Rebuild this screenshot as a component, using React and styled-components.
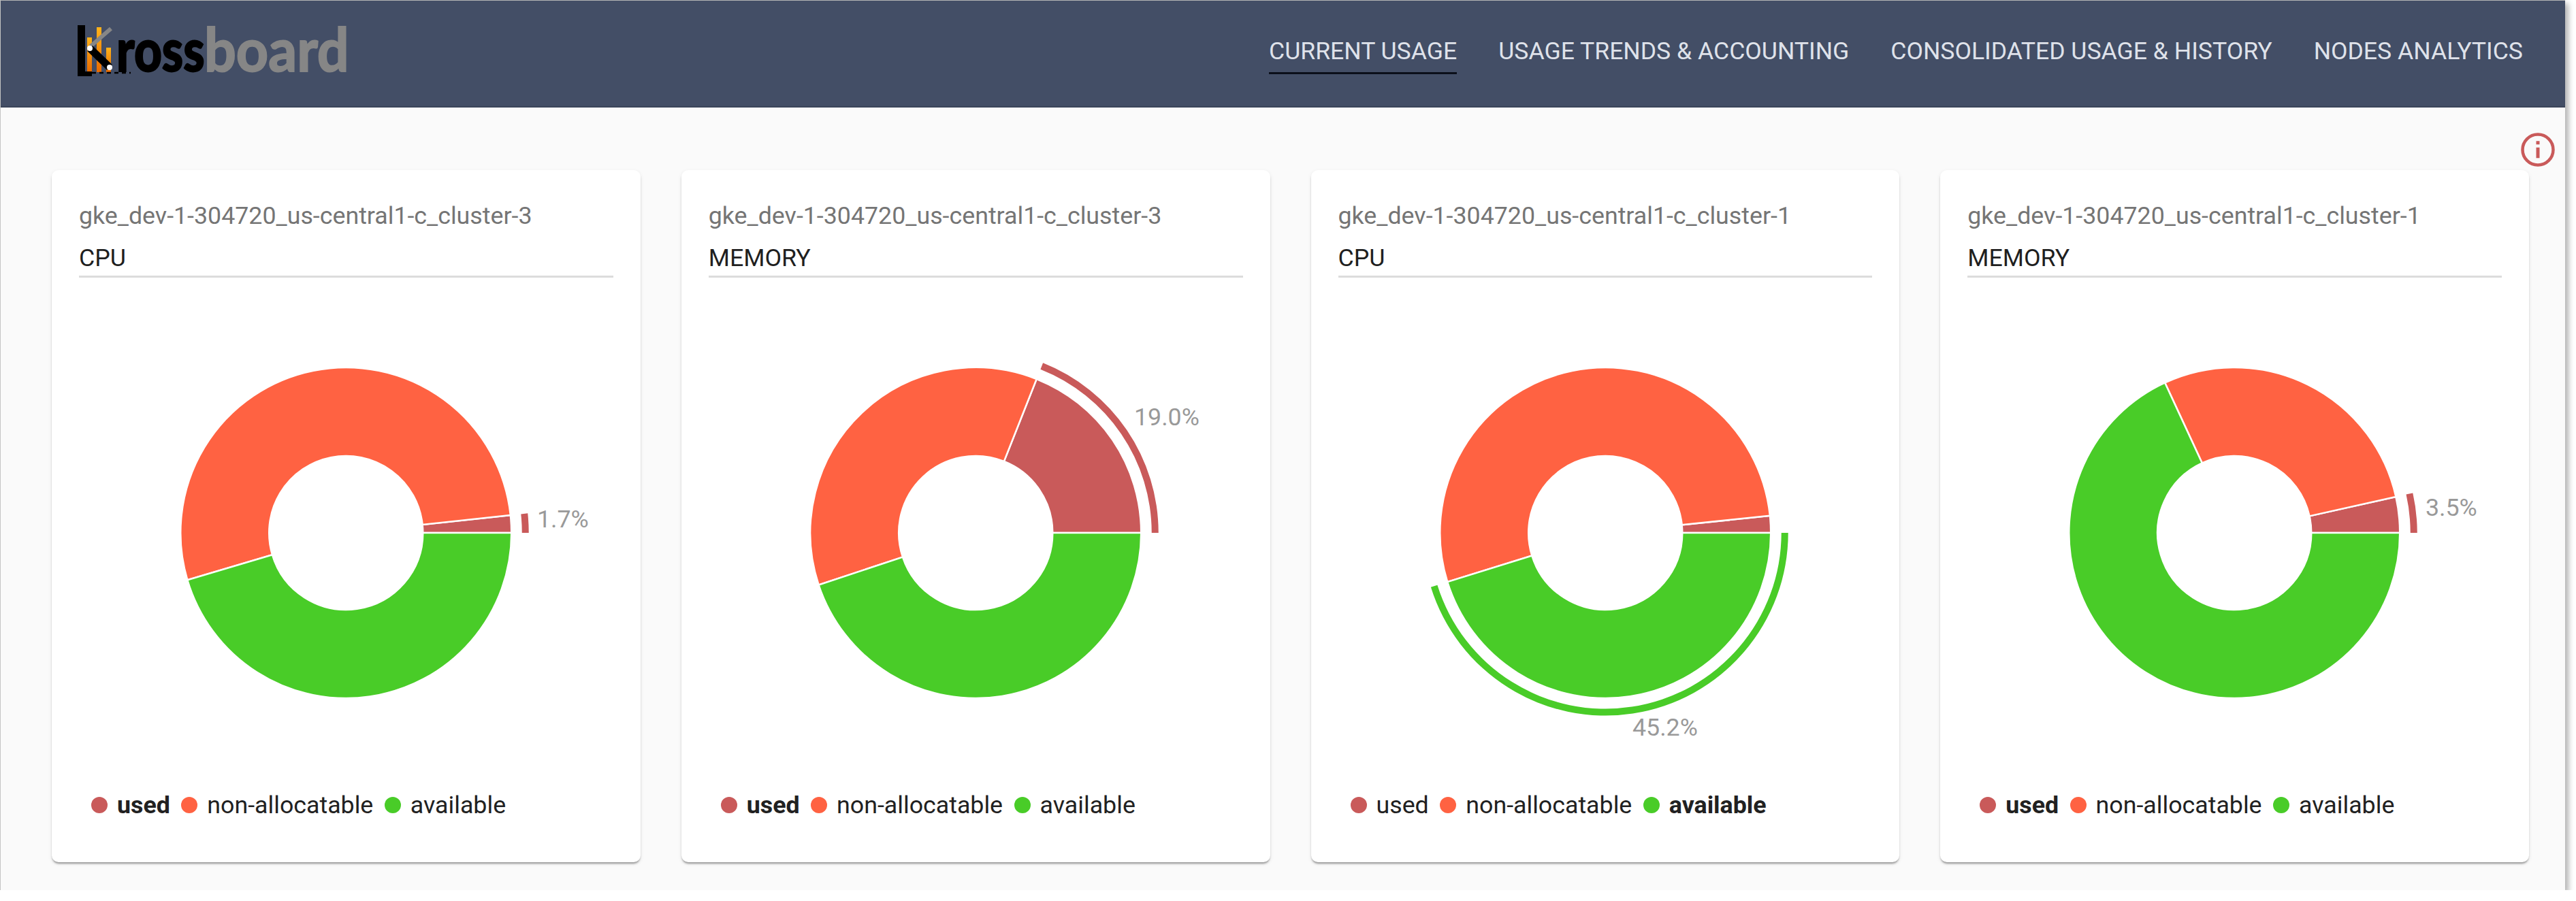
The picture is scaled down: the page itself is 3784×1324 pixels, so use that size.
import React from 'react';
import styled, { createGlobalStyle } from 'styled-components';

const Global = createGlobalStyle`
  html, body { margin: 0; padding: 0; background: #fff; }
  body { font-family: Roboto, "Liberation Sans", sans-serif; }
`;

const COLORS = { used: '#c95a5a', non: '#ff6242', avail: '#49cc28' };
const CX = 432.25, CY = 375, R = 243, r = 113, ER1 = 258.5, ER2 = 268.5;

const Frame = styled.div`
  width: 3767px;
  height: 1307px;
  border-top: 1px solid #b5b5b5;
  border-left: 1px solid #c4c4c4;
  background: #fafafa;
  box-shadow: 5px 5px 8px rgba(0, 0, 0, 0.3);
  display: flex;
  flex-direction: column;
`;
const Header = styled.header`
  height: 157px;
  flex: none;
  background: #434e66;
  box-shadow: inset 0 -2px 1px rgba(0, 0, 0, 0.12);
  display: flex;
  align-items: flex-start;
  justify-content: space-between;
  padding: 0 62px 0 112px;
`;
const LogoWrap = styled.div`
  margin-top: 5px;
  line-height: 0;
`;
const Nav = styled.nav`
  display: flex;
  gap: 61px;
`;
const NavItem = styled.a`
  margin-top: 53px;
  height: 52px;
  font-size: 35.6px;
  line-height: 42px;
  font-weight: 400;
  color: #dfe2ea;
  white-space: nowrap;
  border-bottom: ${(p) => (p.$active ? '3px solid #0b0f1a' : '3px solid transparent')};
`;
const Main = styled.main`
  position: relative;
  flex: 1;
  padding: 92px 53px 41px 75px;
  display: grid;
  grid-template-columns: repeat(4, 1fr);
  gap: 60px;
`;
const InfoButton = styled.span`
  position: absolute;
  top: 37px;
  right: 15px;
  width: 50px;
  height: 50px;
  line-height: 0;
`;
const Card = styled.section`
  background: #fff;
  border-radius: 10px;
  box-shadow: 0 3px 3px -1px rgba(0, 0, 0, 0.38), 0 2px 6px rgba(0, 0, 0, 0.08);
  padding: 47px 40px 0;
  display: flex;
  flex-direction: column;
  min-width: 0;
`;
const Cluster = styled.div`
  font-size: 35.75px;
  line-height: 40px;
  color: #757575;
  white-space: nowrap;
`;
const Resource = styled.div`
  font-size: 35.75px;
  line-height: 40px;
  margin-top: 22px;
  color: #1f1f1f;
  border-bottom: 3px solid #dcdcdc;
  padding-bottom: 6px;
`;
const ChartSvg = styled.svg`
  display: block;
  margin: 0 -40px;
  width: 864.5px;
  height: 755px;
  flex: none;
`;
const Legend = styled.ul`
  list-style: none;
  margin: 0;
  padding: 0 0 0 18px;
  display: flex;
  align-items: center;
  gap: 16.5px;
  height: 40px;
`;
const LegendItem = styled.li`
  display: flex;
  align-items: center;
  gap: 14px;
  font-size: 35.75px;
  line-height: 40px;
  color: #212121;
  font-weight: ${(p) => (p.$bold ? 700 : 400)};
`;
const Dot = styled.i`
  width: 24px;
  height: 24px;
  border-radius: 50%;
  background: ${(p) => p.$color};
  flex: none;
`;
const PctLabel = styled.text`
  font-family: Roboto, "Liberation Sans", sans-serif;
  font-size: 35.75px;
  fill: #999999;
`;
const LogoWord = styled.text`
  font-family: Lato, sans-serif;
  font-size: 88px;
  font-weight: ${(p) => p.$weight};
  fill: ${(p) => p.$color};
  stroke: ${(p) => p.$color};
  stroke-width: 2px;
`;

const pt = (rad, deg) => {
  const a = (deg * Math.PI) / 180;
  return [CX + rad * Math.cos(a), CY - rad * Math.sin(a)];
};
const sector = (a0, a1) => {
  const [x0, y0] = pt(R, a0);
  const [x1, y1] = pt(R, a1);
  const [x2, y2] = pt(r, a1);
  const [x3, y3] = pt(r, a0);
  const large = a1 - a0 > 180 ? 1 : 0;
  return `M${x0} ${y0}A${R} ${R} 0 ${large} 0 ${x1} ${y1}L${x2} ${y2}A${r} ${r} 0 ${large} 1 ${x3} ${y3}Z`;
};
const band = (a0, a1) => {
  const [x0, y0] = pt(ER2, a0);
  const [x1, y1] = pt(ER2, a1);
  const [x2, y2] = pt(ER1, a1);
  const [x3, y3] = pt(ER1, a0);
  const large = a1 - a0 > 180 ? 1 : 0;
  return `M${x0} ${y0}A${ER2} ${ER2} 0 ${large} 0 ${x1} ${y1}L${x2} ${y2}A${ER1} ${ER1} 0 ${large} 1 ${x3} ${y3}Z`;
};

const Donut = ({ used, avail, active, label, lx, ly }) => {
  const u = used * 3.6;
  const splitA = 360 - avail * 3.6;
  const ext = active === 'used' ? band(0, u) : band(splitA, 360);
  return (
    <ChartSvg viewBox="0 0 864.5 755">
      <path d={sector(0, u)} fill={COLORS.used} stroke="#fff" strokeWidth="2.5" />
      <path d={sector(u, splitA)} fill={COLORS.non} stroke="#fff" strokeWidth="2.5" />
      <path d={sector(splitA, 360)} fill={COLORS.avail} stroke="#fff" strokeWidth="2.5" />
      <path d={ext} fill={active === 'used' ? COLORS.used : COLORS.avail} />
      <PctLabel x={lx} y={ly}>{label}</PctLabel>
    </ChartSvg>
  );
};

const Logo = () => (
  <svg width="420" height="130" viewBox="0 -30 420 130">
    <defs>
      <linearGradient id="bar" x1="0" y1="0" x2="0" y2="1">
        <stop offset="0" stopColor="#ffb31a" />
        <stop offset="1" stopColor="#e86a00" />
      </linearGradient>
    </defs>
    <g style={{ filter: 'blur(0.5px)' }}>
      <rect x="15" y="19" width="7" height="51" fill="url(#bar)" />
      <rect x="29" y="4" width="7" height="66" fill="url(#bar)" />
      <rect x="43" y="34" width="7" height="36" fill="url(#bar)" />
      <path d="M20 32 L50 6" stroke="#868686" strokeWidth="6" fill="none" />
      <rect x="1" y="1" width="11" height="75" fill="#000" />
      <rect x="1" y="69" width="21" height="7" fill="#000" />
      <path d="M22 71 H79" stroke="#000" strokeWidth="2.5" strokeDasharray="6 5" fill="none" />
      <path d="M19 35 L48 63" stroke="#000" strokeWidth="11" fill="none" />
      <circle cx="19" cy="35" r="4" fill="#fff" />
      <circle cx="48" cy="63" r="4" fill="#fff" />
      <LogoWord $weight={900} $color="#000" transform="translate(58 69) scale(0.806 1)">ross</LogoWord>
      <LogoWord $weight={700} $color="#868686" transform="translate(187 69) scale(0.938 1)">board</LogoWord>
    </g>
  </svg>
);

const charts = [
  { cluster: 'gke_dev-1-304720_us-central1-c_cluster-3', res: 'CPU', used: 1.7, avail: 45.4, active: 'used', label: '1.7%', lx: 713, ly: 367 },
  { cluster: 'gke_dev-1-304720_us-central1-c_cluster-3', res: 'MEMORY', used: 19, avail: 44.9, active: 'used', label: '19.0%', lx: 665, ly: 217 },
  { cluster: 'gke_dev-1-304720_us-central1-c_cluster-1', res: 'CPU', used: 1.65, avail: 45.2, active: 'avail', label: '45.2%', lx: 472, ly: 673 },
  { cluster: 'gke_dev-1-304720_us-central1-c_cluster-1', res: 'MEMORY', used: 3.5, avail: 68.1, active: 'used', label: '3.5%', lx: 713, ly: 350 },
];

export default function App() {
  return (
    <>
      <Global />
      <Frame>
        <Header>
          <LogoWrap><Logo /></LogoWrap>
          <Nav>
            <NavItem $active>CURRENT USAGE</NavItem>
            <NavItem>USAGE TRENDS &amp; ACCOUNTING</NavItem>
            <NavItem>CONSOLIDATED USAGE &amp; HISTORY</NavItem>
            <NavItem>NODES ANALYTICS</NavItem>
          </Nav>
        </Header>
        <Main>
          <InfoButton>
            <svg width="50" height="50" viewBox="0 0 50 50" fill="none" stroke="#c95a5a" strokeWidth="4.5">
              <circle cx="25" cy="25" r="22.5" />
              <path d="M25 21.7v15.6M25 12.3v5" strokeWidth="5" />
            </svg>
          </InfoButton>
          {charts.map((c, i) => (
            <Card key={i}>
              <Cluster>{c.cluster}</Cluster>
              <Resource>{c.res}</Resource>
              <Donut {...c} />
              <Legend>
                <LegendItem $bold={c.active === 'used'}><Dot $color={COLORS.used} />used</LegendItem>
                <LegendItem><Dot $color={COLORS.non} />non-allocatable</LegendItem>
                <LegendItem $bold={c.active === 'avail'}><Dot $color={COLORS.avail} />available</LegendItem>
              </Legend>
            </Card>
          ))}
        </Main>
      </Frame>
    </>
  );
}
